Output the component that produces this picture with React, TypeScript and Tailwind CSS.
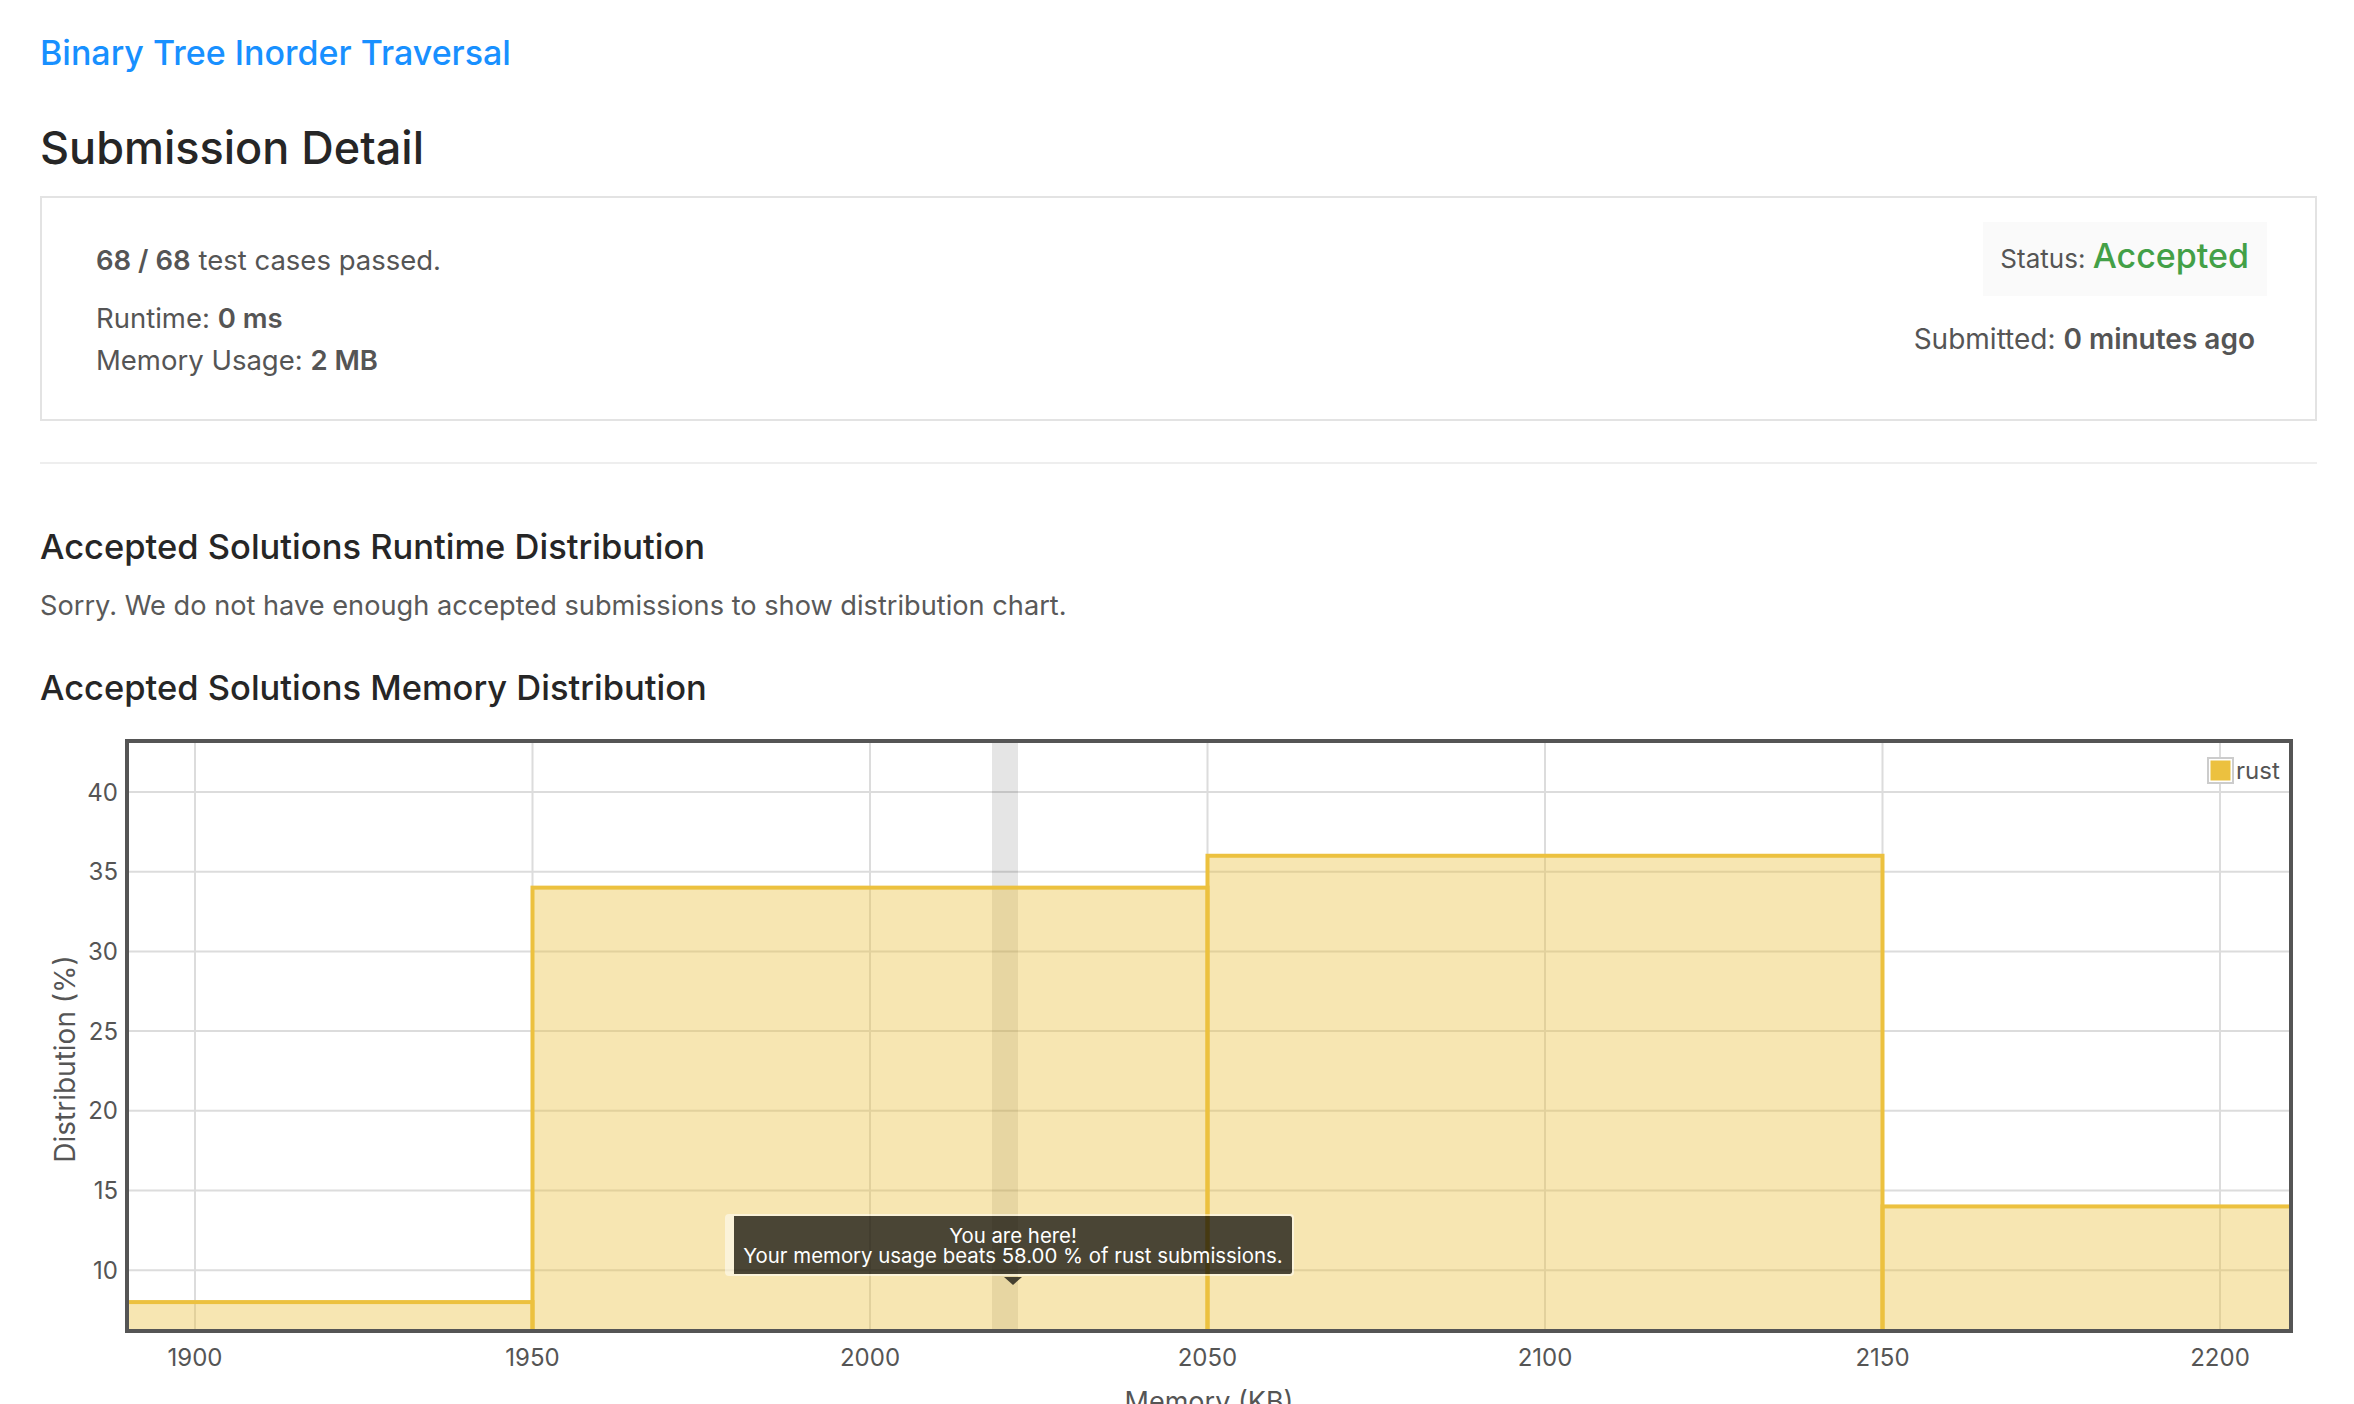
import React from "react";

// chart scale helpers, in svg pixels (svg starts at page x=40)
const xOf = (kb: number) => 155 + (kb - 1900) * 6.75;
const yOf = (v: number) => 71 + (40 - v) * 15.94;

const PLOT = { left: 89, right: 2249, top: 22, bottom: 608 };
const GRID_Y = [10, 15, 20, 25, 30, 35, 40];
const GRID_X = [1900, 1950, 2000, 2050, 2100, 2150, 2200];

const bars = [
  { from: 1870, to: 1950, value: 8 },
  { from: 1950, to: 2050, value: 34 },
  { from: 2050, to: 2150, value: 36 },
  { from: 2150, to: 2260, value: 14 },
];

const MemoryChart: React.FC = () => {
  return (
    <div className="relative mt-[13px]">
      <svg width={2277} height={700} className="block" fontFamily="Inter, sans-serif">
        <defs>
          <clipPath id="plot-clip">
            <rect x={PLOT.left} y={PLOT.top} width={PLOT.right - PLOT.left} height={PLOT.bottom - PLOT.top} />
          </clipPath>
        </defs>

        {/* grid */}
        {GRID_Y.map((v) => (
          <line key={v} x1={PLOT.left} x2={PLOT.right} y1={yOf(v)} y2={yOf(v)} stroke="#dcdcdc" strokeWidth={2} />
        ))}
        {GRID_X.map((kb) => (
          <line key={kb} x1={xOf(kb)} x2={xOf(kb)} y1={PLOT.top} y2={PLOT.bottom} stroke="#dcdcdc" strokeWidth={2} />
        ))}

        {/* "you are here" band */}
        <rect x={952} y={PLOT.top} width={26} height={PLOT.bottom - PLOT.top} fill="rgba(0,0,0,0.1)" />

        {/* bars */}
        <g clipPath="url(#plot-clip)">
          {bars.map((b) => (
            <rect
              key={b.from}
              x={xOf(b.from)}
              y={yOf(b.value)}
              width={xOf(b.to) - xOf(b.from)}
              height={640 - yOf(b.value)}
              fill="rgba(236,193,63,0.4)"
              stroke="#ecc13f"
              strokeWidth={4}
            />
          ))}
        </g>

        {/* frame */}
        <rect x={87} y={20} width={2164} height={590} fill="none" stroke="#555555" strokeWidth={4} />

        {/* y axis */}
        {GRID_Y.map((v) => (
          <text key={v} x={78} y={yOf(v) + 8.5} textAnchor="end" fontSize={24} fill="#555555">
            {v}
          </text>
        ))}
        <text
          x={0}
          y={0}
          transform="translate(35 338) rotate(-90)"
          textAnchor="middle"
          fontSize={28}
          fill="#555555"
        >
          Distribution (%)
        </text>

        {/* x axis */}
        {GRID_X.map((kb) => (
          <text key={kb} x={xOf(kb)} y={645} textAnchor="middle" fontSize={24} fill="#555555">
            {kb}
          </text>
        ))}
        <text x={1169} y={690} textAnchor="middle" fontSize={27} fill="#555555">
          Memory (KB)
        </text>

        {/* legend */}
        <rect x={2168} y={37} width={25} height={25} fill="#ffffff" stroke="#cccccc" strokeWidth={2} />
        <rect x={2170.5} y={39.5} width={20} height={20} fill="#ecc13f" />
        <text x={2196} y={58} fontSize={24} fill="#555555">
          rust
        </text>
      </svg>

      {/* tooltip */}
      <div className="absolute left-[685px] top-[493px] w-[569px]">
        <div className="rounded-[4px] border-2 border-l-[9px] border-white/50 bg-black/70 bg-clip-padding px-[8px] pt-[10px] pb-[8px] text-center text-[20.4px] leading-[20px] text-white">
          You are here!
          <br />
          Your memory usage beats 58.00 % of rust submissions.
        </div>
        <div className="absolute left-[279px] top-[63px] h-0 w-0 border-x-[9px] border-t-[8px] border-x-transparent border-t-black/70" />
      </div>
    </div>
  );
};

const App: React.FC = () => {
  return (
    <div className="min-h-screen bg-white pl-[40px] pr-[37px] pt-[33px] font-['Inter',sans-serif]">
      {/* Problem title */}
      <a className="block text-[34px] font-medium leading-[40px] text-[#1890ff]">Binary Tree Inorder Traversal</a>

      <h3 className="mt-[47px] text-[45px] font-medium leading-[56px] text-[#262626]">Submission Detail</h3>

      {/* Result card */}
      <div className="mt-[20px] flex h-[225px] justify-between border-2 border-[#e3e3e3] text-[#555555]">
        <div className="pl-[54px] pt-[46px]">
          <div className="text-[27.5px] leading-[32px]">
            <span className="font-semibold">68 / 68</span> test cases passed.
          </div>
          <div className="mt-[21px] text-[27.5px] leading-[42px]">
            Runtime: <span className="font-semibold">0 ms</span>
          </div>
          <div className="text-[27.5px] leading-[42px]">
            Memory Usage: <span className="font-semibold">2 MB</span>
          </div>
        </div>

        <div className="flex flex-col items-end pr-[48px] pt-[24px]">
          <div className="flex h-[74px] items-baseline bg-[#fafafa] pl-[17px] pr-[18px] pt-[14px]">
            <span className="text-[26px] leading-[40px]">Status:&nbsp;</span>
            <span className="text-[34px] font-medium leading-[40px] text-[#43a047]">Accepted</span>
          </div>
          <div className="mr-[12px] mt-[27px] text-[28px] leading-[32px]">
            Submitted: <span className="font-semibold">0 minutes ago</span>
          </div>
        </div>
      </div>

      <div className="mt-[41px] h-[2px] bg-[#eeeeee]" />

      <h4 className="mt-[63px] text-[34.5px] font-medium leading-[40px] text-[#262626]">
        Accepted Solutions Runtime Distribution
      </h4>
      <p className="mt-[21px] text-[27.2px] leading-[36px] text-[#595959]">
        Sorry. We do not have enough accepted submissions to show distribution chart.
      </p>

      <h4 className="mt-[44px] text-[34.5px] font-medium leading-[40px] text-[#262626]">
        Accepted Solutions Memory Distribution
      </h4>

      <MemoryChart />
    </div>
  );
};

export default App;
